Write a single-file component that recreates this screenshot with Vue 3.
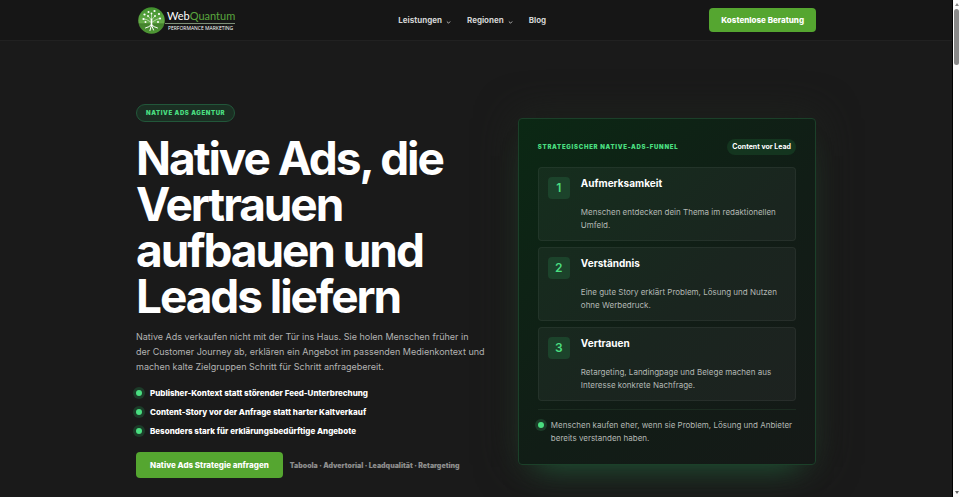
<script setup>
const navItems = [
  { title: 'Leistungen', dropdown: true },
  { title: 'Regionen', dropdown: true },
  { title: 'Blog', dropdown: false },
];
const benefits = [
  'Publisher-Kontext statt störender Feed-Unterbrechung',
  'Content-Story vor der Anfrage statt harter Kaltverkauf',
  'Besonders stark für erklärungsbedürftige Angebote',
];
const steps = [
  {
    title: 'Aufmerksamkeit',
    text: 'Menschen entdecken dein Thema im redaktionellen Umfeld.',
  },
  {
    title: 'Verständnis',
    text: 'Eine gute Story erklärt Problem, Lösung und Nutzen ohne Werbedruck.',
  },
  {
    title: 'Vertrauen',
    text: 'Retargeting, Landingpage und Belege machen aus Interesse konkrete Nachfrage.',
  },
];
</script>
<template>
  <div class="window">
    <div class="page">
      <header class="header">
        <div class="container header__inner">
          <a href="#" class="logo">
            <svg class="logo__icon" viewBox="0 0 54 54">
              <defs>
                <linearGradient id="leaf" x1="0" y1="0" x2="0" y2="1">
                  <stop offset="0" stop-color="#3f8f2c" />
                  <stop offset="0.6" stop-color="#66ad48" />
                  <stop offset="0.62" stop-color="#43802c" />
                  <stop offset="1" stop-color="#4f9a35" />
                </linearGradient>
              </defs>
              <circle cx="27" cy="27" r="26.5" fill="url(#leaf)" />
              <g fill="none" stroke="#fff" stroke-linecap="round">
                <path d="M27 24V38" stroke-width="3" />
                <path
                  d="M27 31L17 25L12 24M27 31L37 25L43 23M27 26L20 18M27 26L34 18M27 22L27 14"
                  stroke-width="1"
                />
                <path
                  d="M26 36Q23 40 15 42M28 36Q31 40 39 42M27 36L24 47M27 36L31 46"
                  stroke-width="2"
                />
              </g>
              <g fill="#fff">
                <circle cx="11" cy="24" r="2.2" />
                <circle cx="13" cy="15" r="2.2" />
                <circle cx="21" cy="10" r="2" />
                <circle cx="27" cy="13" r="1.8" />
                <circle cx="33" cy="8" r="2.2" />
                <circle cx="42" cy="14" r="2.2" />
                <circle cx="44" cy="23" r="2.2" />
                <circle cx="40" cy="30" r="2" />
                <circle cx="15" cy="30" r="2" />
                <circle cx="20" cy="18" r="1.8" />
                <circle cx="34" cy="18" r="1.8" />
              </g>
            </svg>
            <span class="logo__text">
              <span class="logo__name">Web<span>Quantum</span></span>
              <span class="logo__claim">PERFORMANCE MARKETING</span>
            </span>
          </a>
          <nav class="nav">
            <a
              href="#"
              class="nav__link"
              v-for="item in navItems"
              :key="item.title"
            >
              {{ item.title }}
              <svg v-if="item.dropdown" class="nav__arrow" viewBox="0 0 6 6">
                <path d="M1 3L3 5L5 3" />
              </svg>
            </a>
          </nav>
          <button class="btn btn--small">Kostenlose Beratung</button>
        </div>
      </header>
      <main class="container hero">
        <section class="intro">
          <span class="intro__badge">Native Ads Agentur</span>
          <h1 class="intro__title">
            Native Ads, die Vertrauen aufbauen und Leads liefern
          </h1>
          <p class="intro__text">
            Native Ads verkaufen nicht mit der Tür ins Haus. Sie holen Menschen
            früher in<br />
            der Customer Journey ab, erklären ein Angebot im passenden
            Medienkontext und machen kalte Zielgruppen Schritt für Schritt
            anfragebereit.
          </p>
          <ul class="intro__list">
            <li v-for="benefit in benefits" :key="benefit">
              <i class="dot"></i>{{ benefit }}
            </li>
          </ul>
          <div class="intro__actions">
            <button class="btn">Native Ads Strategie anfragen</button>
            <span class="intro__note">
              Taboola · Advertorial · Leadqualität · Retargeting
            </span>
          </div>
        </section>
        <section class="funnel">
          <div class="funnel__head">
            <h2 class="funnel__title">Strategischer Native-Ads-Funnel</h2>
            <span class="funnel__tag">Content vor Lead</span>
          </div>
          <ol class="funnel__list">
            <li class="step" v-for="(step, index) in steps" :key="step.title">
              <span class="step__number">{{ index + 1 }}</span>
              <div>
                <h3 class="step__title">{{ step.title }}</h3>
                <p class="step__text">{{ step.text }}</p>
              </div>
            </li>
          </ol>
          <p class="funnel__note">
            <i class="dot"></i>
            <span>
              Menschen kaufen eher, wenn sie Problem, Lösung und Anbieter bereits
              verstanden haben.
            </span>
          </p>
        </section>
      </main>
    </div>
    <div class="scrollbar">
      <i class="scrollbar__up"></i>
      <i class="scrollbar__thumb"></i>
      <i class="scrollbar__down"></i>
    </div>
  </div>
</template>
<style>
body {
  margin: 0;
  background: #1a1a1a;
}
</style>
<style scoped>
.window {
  display: flex;
  min-height: 100vh;
  font-family: Inter, 'Liberation Sans', sans-serif;
  font-size: 8px;
  color: #fff;
}
.page {
  flex: 1;
  min-width: 0;
  overflow: hidden;
  background: #1a1a1a;
}
.container {
  max-width: 680px;
  margin: 0 auto;
}
.header {
  background: #161616;
  border-bottom: 1px solid #212121;
}
.header__inner {
  display: flex;
  align-items: center;
  justify-content: space-between;
  height: 40px;
}
.logo {
  display: flex;
  align-items: center;
  color: #fff;
  text-decoration: none;
  margin-left: 2px;
}
.logo__icon {
  width: 27px;
  height: 27px;
}
.logo__text {
  display: flex;
  flex-direction: column;
}
.logo__name {
  padding-left: 2px;
  border-bottom: 1px solid #7d8f76;
  font-family: Lato, sans-serif;
  font-size: 11px;
  line-height: 14px;
}
.logo__name span {
  color: #5aa63e;
}
.logo__claim {
  padding-left: 3px;
  font-family: 'Open Sans', sans-serif;
  font-size: 5px;
  line-height: 8px;
}
.nav {
  display: flex;
  gap: 16px;
}
.nav__link {
  display: flex;
  align-items: center;
  gap: 4px;
  color: #d4d4d4;
  font-weight: 700;
  line-height: 12px;
  text-decoration: none;
}
.nav__arrow {
  width: 5px;
  height: 5px;
  margin-top: 3px;
  fill: none;
  stroke: #d4d4d4;
}
.btn {
  padding: 0 14px;
  border: none;
  border-radius: 4px;
  background: #55a630;
  color: #fff;
  font-family: inherit;
  font-size: 8px;
  font-weight: 800;
  line-height: 26px;
  white-space: nowrap;
}
.btn--small {
  padding: 0 12px;
  line-height: 24px;
}
.hero {
  display: grid;
  grid-template-columns: minmax(0, 118fr) minmax(0, 100fr);
  gap: 30px;
  align-items: center;
  padding: 63px 0 16px;
}
.intro__badge {
  display: table;
  padding: 0 9px;
  border: 1px solid #22573a;
  border-radius: 9px;
  background: #1b2f23;
  color: #4ade80;
  font-size: 6px;
  font-weight: 900;
  letter-spacing: 0.1em;
  line-height: 16px;
  text-transform: uppercase;
}
.intro__title {
  margin: 13px 0 10px;
  font-size: 46px;
  font-weight: 700;
  letter-spacing: -0.045em;
  line-height: 46px;
}
.intro__text {
  margin: 0 0 13px;
  color: #b3b3b3;
  font-size: 9px;
  line-height: 15px;
}
.intro__list {
  display: grid;
  gap: 7px;
  margin: 0 0 15px;
  padding: 0;
  list-style: none;
}
.intro__list li {
  display: flex;
  align-items: center;
  gap: 8px;
  font-weight: 800;
  line-height: 12px;
}
.dot {
  flex: none;
  width: 6px;
  height: 6px;
  border-radius: 50%;
  background: #4ade80;
  box-shadow: 0 0 0 3px #1c3c29;
}
.intro__actions {
  display: flex;
  align-items: center;
  gap: 7px;
}
.intro__note {
  color: #8c8c8c;
  font-size: 7px;
  font-weight: 900;
}
.funnel {
  padding: 20px 19px 19px;
  border: 1px solid #1b4029;
  border-radius: 4px;
  background: linear-gradient(135deg, #0b2814, #111d16 55%, #151917);
  box-shadow: 0 20px 30px -18px #1f5636, 0 0 40px #20251f;
}
.funnel__head {
  display: flex;
  align-items: center;
  justify-content: space-between;
  margin-bottom: 12px;
}
.funnel__title {
  margin: 0;
  color: #4ade80;
  font-size: 6px;
  font-weight: 900;
  letter-spacing: 0.12em;
  text-transform: uppercase;
}
.funnel__tag {
  padding: 0 5px;
  border-radius: 8px;
  background: #14351f;
  font-size: 7px;
  font-weight: 700;
  line-height: 16px;
}
.funnel__list {
  display: grid;
  gap: 6px;
  margin: 0;
  padding: 0;
  list-style: none;
}
.step {
  display: grid;
  grid-template-columns: 22px 1fr;
  gap: 11px;
  padding: 9px 9px 8px;
  border: 1px solid rgba(255, 255, 255, 0.05);
  border-radius: 4px;
  background: rgba(255, 255, 255, 0.04);
}
.step__number {
  height: 22px;
  border-radius: 4px;
  background: #1c432b;
  color: #4ade80;
  font-size: 12px;
  font-weight: 600;
  line-height: 22px;
  text-align: center;
}
.step__title {
  margin: 0 0 17px;
  font-size: 10px;
  font-weight: 700;
  line-height: 12px;
}
.step__text {
  margin: 0;
  color: #b3b8b4;
  line-height: 13px;
}
.funnel__note {
  display: flex;
  gap: 7px;
  margin: 8px 0 0;
  padding-top: 9px;
  border-top: 1px solid #1b2b20;
  color: #b3b8b4;
  line-height: 13px;
}
.funnel__note .dot {
  margin-top: 3px;
}
.scrollbar {
  display: flex;
  flex-direction: column;
  align-items: center;
  width: 7px;
  border-left: 1px solid #000;
  background: #fcfcfc;
}
.scrollbar__thumb {
  width: 5px;
  height: 56px;
  margin: 3px 0 auto;
  border-radius: 3px;
  background: #8b8b8b;
}
.scrollbar__up,
.scrollbar__down {
  margin: 3px 0;
  border: 2px solid transparent;
}
.scrollbar__up {
  margin-bottom: 0;
  border-top: 0;
  border-bottom: 3px solid #8b8b8b;
}
.scrollbar__down {
  border-top: 3px solid #6b6b6b;
  border-bottom: 0;
}
</style>
